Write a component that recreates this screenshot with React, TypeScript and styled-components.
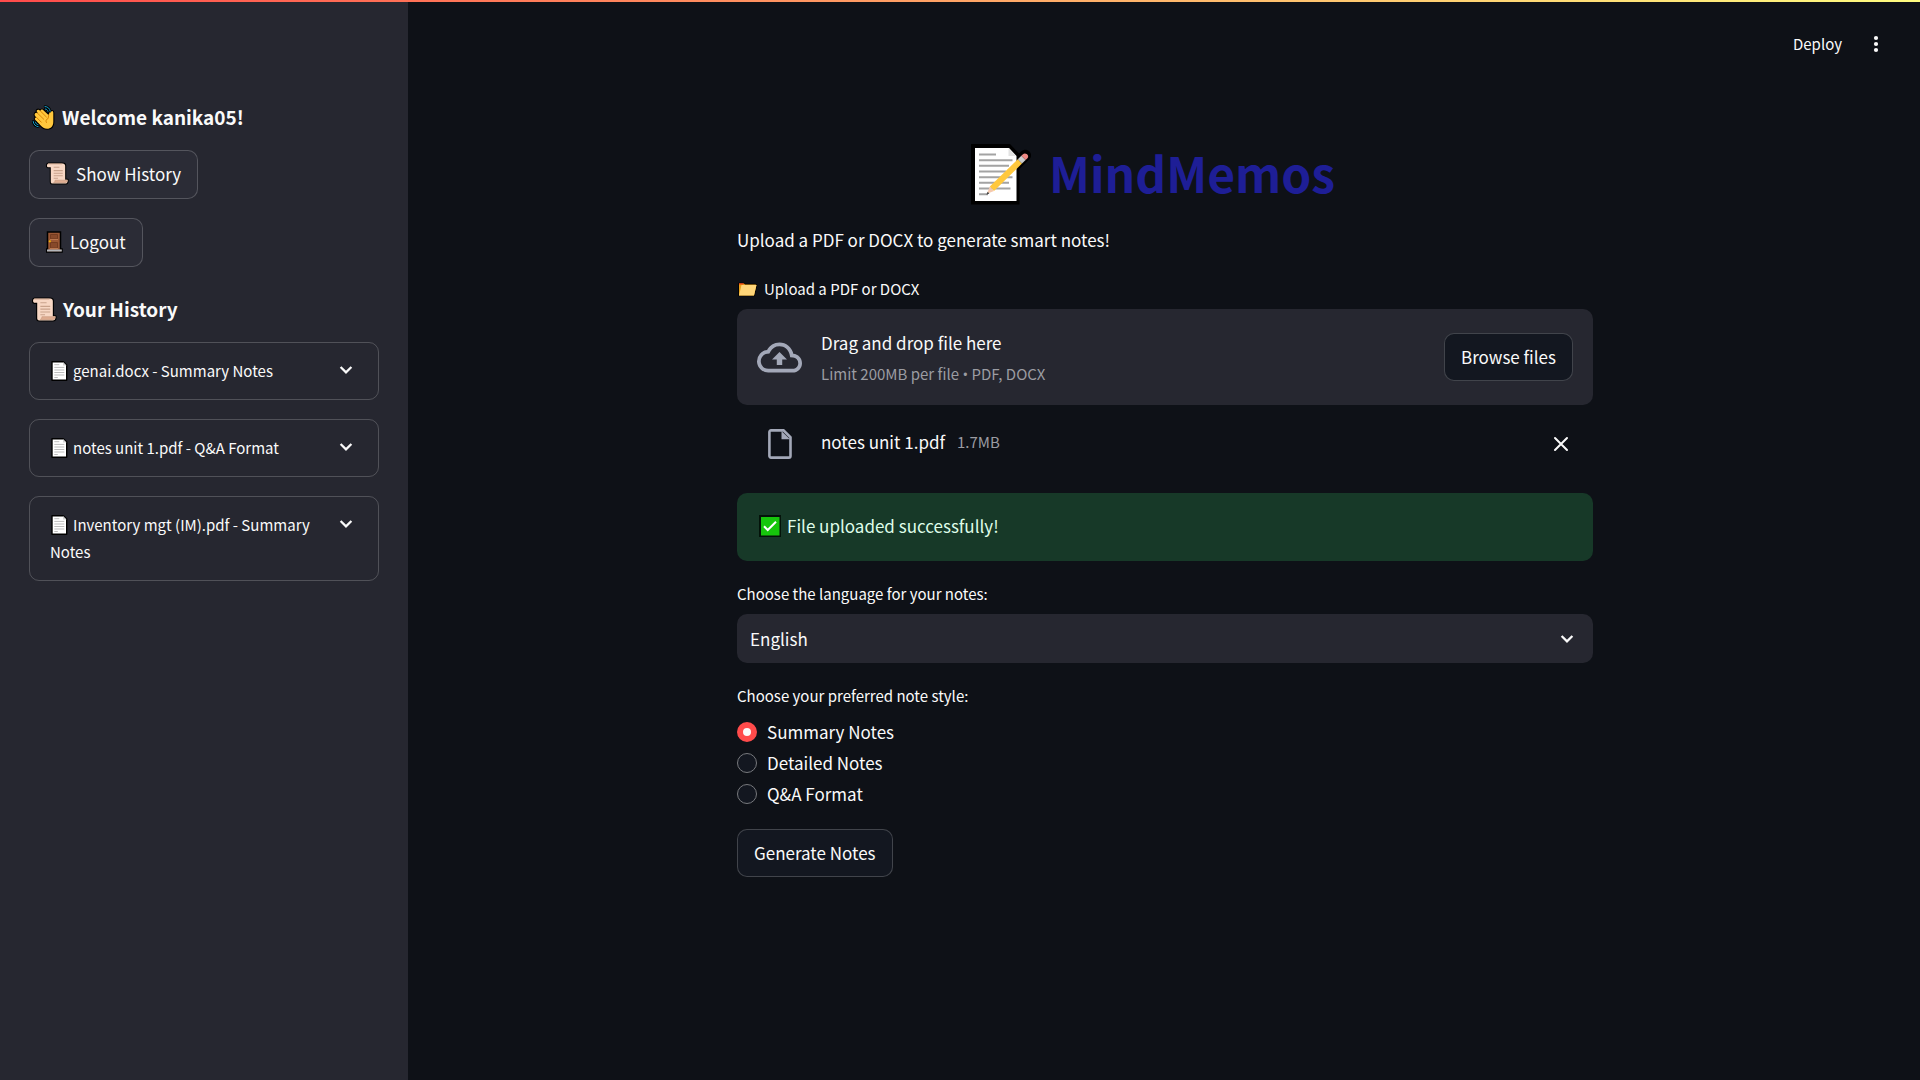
import React, { useState } from "react";
import styled, { createGlobalStyle } from "styled-components";

const fontStack = '"Noto Sans CJK SC", "Noto Sans", sans-serif';

const GlobalStyle = createGlobalStyle`
  *, *::before, *::after { box-sizing: border-box; }
  body {
    margin: 0;
    background: #0e1117;
    color: #fafafa;
    font-family: ${fontStack};
    font-size: 17px;
    line-height: 30px;
  }
  button, select, input { font: inherit; color: inherit; }
  h1, h2, p { margin: 0; }
`;

const Page = styled.div`
  display: flex;
  min-height: 100vh;
`;

const Decoration = styled.div`
  position: fixed;
  inset: 0 0 auto;
  height: 2px;
  background: linear-gradient(90deg, #ff4b4b, #fffd80);
`;

const Sidebar = styled.aside`
  flex: 0 0 408px;
  padding: 105px 29px 40px;
  background: #262730;
`;

const SideHeading = styled.h2`
  display: flex;
  align-items: center;
  gap: 6px;
  height: 24px;
  margin: 0 0 21px;
  padding-left: 3px;
  font-size: 19px;
  line-height: 24px;
  font-weight: 600;
`;

const SideActions = styled.div`
  display: flex;
  flex-direction: column;
  align-items: flex-start;
  gap: 19px;
  margin-bottom: 30px;
`;

const Button = styled.button<{ $onSidebar?: boolean }>`
  display: inline-flex;
  align-items: center;
  gap: 7px;
  height: ${(p) => (p.$onSidebar ? 49 : 48)}px;
  padding: ${(p) => (p.$onSidebar ? "0 16px 2px" : "0 16px")};
  border: 1px solid rgba(250, 250, 250, 0.2);
  border-radius: 10px;
  background: ${(p) => (p.$onSidebar ? "#2b2c36" : "#131720")};
  white-space: nowrap;
  cursor: pointer;
`;

const HistoryList = styled.div`
  display: flex;
  flex-direction: column;
  gap: 19px;
`;

const HistoryItem = styled.details`
  border: 1px solid rgba(250, 250, 250, 0.2);
  border-radius: 10px;
`;

const HistorySummary = styled.summary`
  display: flex;
  justify-content: space-between;
  gap: 10px;
  padding: 14px 25px 15px 20px;
  font-size: 15px;
  line-height: 27px;
  cursor: pointer;
  list-style: none;
`;

const ChevronBox = styled.span`
  display: flex;
  align-items: center;
  flex: none;
  height: 26px;
`;

const PageGlyph = styled.svg`
  width: 18px;
  height: 20px;
  margin-right: 5px;
  vertical-align: -4px;
`;

const Main = styled.main`
  display: flex;
  flex-direction: column;
  flex: 1;
  min-width: 0;
  padding-left: 2px;
`;

const Toolbar = styled.header`
  display: flex;
  justify-content: flex-end;
  align-items: center;
  gap: 22px;
  height: 88px;
  padding: 0 32px;
`;

const ToolButton = styled.button`
  display: flex;
  align-items: center;
  padding: 0;
  border: 0;
  background: none;
  font-size: 15px;
  cursor: pointer;
`;

const Column = styled.div`
  width: 100%;
  max-width: 856px;
  margin: 0 auto;
  padding: 54px 0 60px;
`;

const Title = styled.h1`
  display: flex;
  justify-content: center;
  align-items: center;
  gap: 17px;
  min-height: 64px;
  padding-right: 24px;
  margin-bottom: 19px;
  color: #1e1e96;
  font-size: 48px;
  font-weight: 700;
`;

const TitleText = styled.span`
  padding-bottom: 5px;
  line-height: 56px;
`;

const Intro = styled.p`
  margin-bottom: 22px;
`;

const Label = styled.label`
  display: flex;
  align-items: center;
  gap: 6px;
  margin-bottom: 8px;
  font-size: 15px;
  line-height: 24px;
`;

const Dropzone = styled.div`
  display: flex;
  align-items: center;
  gap: 18px;
  height: 96px;
  padding: 0 20px 0 19px;
  border-radius: 10px;
  background: #262730;
`;

const IconSlot = styled.span`
  display: flex;
  justify-content: center;
  flex: 0 0 47px;
  color: #a3a8b8;
`;

const Grow = styled.div`
  display: grid;
  flex: 1;
  gap: 1px;
  padding-top: 3px;
`;

const Hint = styled.p`
  font-size: 15px;
  color: #9b9ca2;
`;

const Bullet = styled.span`
  font-family: "Open Sans", "Noto Sans", sans-serif;
`;

const HiddenFile = styled.input`
  display: none;
`;

const FileRow = styled.div`
  display: flex;
  align-items: center;
  gap: 18px;
  height: 40px;
  margin: 19px 0 29px;
  padding: 0 22px 0 19px;
`;

const FileName = styled.div`
  display: flex;
  flex: 1;
  gap: 12px;
  padding-bottom: 4px;
`;

const FileSize = styled.small`
  font-size: 15px;
  color: #9b9ca2;
`;

const Alert = styled.div`
  display: flex;
  align-items: center;
  gap: 6px;
  height: 68px;
  margin-bottom: 21px;
  padding: 0 22px 2px;
  border-radius: 10px;
  background: #173928;
  color: #dffde9;
`;

const SelectBox = styled.div`
  display: grid;
  align-items: center;
  margin-bottom: 21px;

  > * { grid-area: 1 / 1; }
  > svg { justify-self: end; margin-right: 19px; pointer-events: none; }
`;

const Select = styled.select`
  width: 100%;
  height: 49px;
  padding: 0 48px 0 13px;
  border: 0;
  border-radius: 10px;
  background: #262730;
  appearance: none;
`;

const RadioGroup = styled.fieldset`
  margin: 0 0 20px;
  padding: 0;
  border: 0;
`;

const Legend = styled.legend`
  padding: 0;
  margin-bottom: 8px;
  font-size: 15px;
  line-height: 24px;
`;

const Option = styled.label`
  display: flex;
  align-items: center;
  gap: 10px;
  line-height: 31px;
`;

const Radio = styled.input`
  width: 20px;
  height: 20px;
  margin: 0;
  border: 1px solid #77797d;
  border-radius: 50%;
  background: #131720;
  appearance: none;

  &:checked {
    border: 6px solid #ff4b4b;
    background: #fafafa;
  }
`;

const Chevron = () => (
  <svg width="14" height="10" viewBox="0 0 14 10" fill="none" stroke="#fafafa" strokeWidth="2.3" aria-hidden>
    <path d="M1.6 2 7 7.4 12.4 2" />
  </svg>
);

const WaveIcon = () => (
  <svg width="24" height="25" viewBox="0 0 24 25" aria-hidden>
    <path
      d="M3.2 8.3c.8-1 2-.7 2.7 0L4.800 6.600c-.5-1.300 1-2.500 2.200-1.700l1.500 1.100c.2-1.400 1.500-1.800 2.600-1l5.400 5.100.9-2.200c.4-1.300 1.200-2.100 2.700-1.800 1 .2 1.200 1 1.200 2v8.600c0 4.700-2.500 7-6.200 7-3 0-4.600-1.200-6.400-3.200L3.400 15c-1.100-1.100-.5-2.600.8-2.600L3 10.800c-.6-.8-.4-1.700.2-2.500z"
      fill="#ffc83d" stroke="#000" strokeWidth="2.200" strokeLinejoin="round" paintOrder="stroke"
    />
    <path d="m5.300 8 6.500 6.300M8.400 6l6 6M4.300 12.200l5 5M16.700 10l-.6 3.500c-2 .7-2.700 2.500-1.700 4" fill="none" stroke="#d67d00" strokeWidth=".9" strokeLinecap="round" />
    <path d="M13 1.500c3 .2 4.800 2 5.200 4.700M13.400 4c1.500.2 2.300 1 2.600 2.400M1.200 16.500c.4 3 2.200 4.800 5 5.200M3.500 17.200c.2 1.300 1.100 2.200 2.500 2.500" fill="none" stroke="#000" strokeWidth="2.600" strokeLinecap="round" />
    <path d="M13 1.500c3 .2 4.800 2 5.200 4.700M13.400 4c1.500.2 2.300 1 2.600 2.400M1.200 16.500c.4 3 2.200 4.800 5 5.200M3.500 17.200c.2 1.300 1.100 2.200 2.500 2.500" fill="none" stroke="#179fc9" strokeWidth="1" strokeLinecap="round" />
  </svg>
);

const ScrollIcon = ({ size }: { size: number }) => (
  <svg width={size} height={size} viewBox="0 0 24 24" aria-hidden>
    <path d="M2.500 1.500h15c1.500 0 2.500 1 2.500 2.500v14.500h2.500v1.500c0 1.500-1 2.500-2.500 2.500H7c-1.500 0-2-1-2-2V5.500H2C.5 5 .8 1.800 2.500 1.500z" fill="#f7d7c4" stroke="#000" strokeWidth="2.200" strokeLinejoin="round" paintOrder="stroke" />
    <path d="M2.200 2h14.500M8 21.500h12c1.300 0 2.200-.9 2.200-2.500H9.500c0 1.300-.5 2.200-1.500 2.500z" fill="#e0ad91" stroke="#c99a80" strokeWidth=".7" />
    <path d="M8 5.500h6M8 9h9.500M8 11.700h9.500M8 14.400h9.500M8 17h4.500" stroke="#c9a38c" strokeWidth="1.100" />
  </svg>
);

const DoorIcon = () => (
  <svg width="17" height="22" viewBox="0 0 17 22" aria-hidden>
    <path d="M1.500 1h13v17H16v3H.7v-3h.8z" fill="#9a5734" stroke="#000" strokeWidth="1.500" />
    <path d="M4.500 3.500h7v4.300h-7zM4.500 11.500h7v5.500h-7z" fill="#87492a" stroke="#743c20" />
    <path d="M4 8.500h8M4 17.500h8" stroke="#b9774f" />
    <circle cx="3.800" cy="10.300" r="1.100" fill="#f0b400" />
    <path d="M1 18.500h14.800v2H1z" fill="#b4b7bb" />
  </svg>
);

const DocIcon = () => (
  <PageGlyph viewBox="0 0 18 20" aria-hidden>
    <path d="M2 .7h11.300L16.700 4v15.300H2z" fill="#fff" stroke="#000" strokeWidth="1.400" strokeLinejoin="round" />
    <path d="M13 1v3.500h3.500z" fill="#d5d5d5" />
    <path d="M4.300 3.700h5M4.300 6.400h10M4.300 9h10M4.300 11.500h10M4.300 14h10M4.300 16.500h3.500" stroke="#bdbdbd" strokeWidth="1" />
  </PageGlyph>
);

const MemoIcon = () => (
  <svg width="61" height="61" viewBox="0 0 61 61" aria-hidden>
    <path d="M0 0h39l9 9.500 2-2c5-5 13 1 9 7L48.500 25v35.500H0z" fill="#000" />
    <path d="M4 4h34l7.500 8v45H4z" fill="#fff" />
    <path d="M37.500 4v8H45z" fill="#e3e3e3" />
    <path d="M8 10.500h17M8 16.200h33.500M8 21.800h30M8 27.500h27M8 33.200h33.500M8 38.800h30M8 44.500h31.500M8 50.200h9" stroke="#a3a3a3" strokeWidth="1.900" />
    <path d="m18.800 42.500 28-27.200 4.200 4.200-28 27.500z" fill="#ffc83d" />
    <path d="m18.800 42.500 4.200 4.500-7 2.800z" fill="#f5c9ae" />
    <path d="m16.600 47.800 1.800 1.800-3 1.200z" fill="#444" />
    <path d="m46.800 15.300 3.500-3.500 4.300 4.300-3.600 3.400z" fill="#cdcdcd" />
    <path d="m50.300 11.800 1.400-1.400c3-3 7.500 1.400 4.500 4.200l-1.600 1.500z" fill="#ee8983" />
  </svg>
);

const FolderIcon = () => (
  <svg width="21" height="15" viewBox="0 0 21 15" aria-hidden>
    <path d="M2 1.500h5l1 1h10.500l1 .500-2.500 10.500H2z" fill="#e9a21b" stroke="#000" strokeWidth="1.600" strokeLinejoin="round" paintOrder="stroke" />
    <path d="M4.500 3h15L17 13.500H2z" fill="#ffd679" />
    <path d="M2 1.300h4.500v1.200H2z" fill="#f03a17" />
  </svg>
);

const CheckIcon = () => (
  <svg width="22" height="22" viewBox="0 0 22 22" aria-hidden>
    <path d="M0 0h22v22H0z" fill="#04130a" />
    <path d="M2 2h18.500v18.500H2z" fill="#16c60c" />
    <path d="m5 11.300 3.700 3.700L17 6.700" fill="none" stroke="#fff" strokeWidth="2" />
  </svg>
);

const CloudIcon = () => (
  <svg width="45" height="45" viewBox="0 0 24 24" fill="currentColor" aria-hidden>
    <path d="M19.350 10.040A7.490 7.490 0 0 0 12 4C9.110 4 6.600 5.640 5.350 8.040A5.994 5.994 0 0 0 0 14c0 3.310 2.690 6 6 6h13c2.760 0 5-2.240 5-5 0-2.640-2.050-4.780-4.650-4.960zM19 18H6c-2.210 0-4-1.790-4-4 0-2.050 1.530-3.760 3.560-3.970l1.070-.11.500-.95A5.469 5.469 0 0 1 12 6c2.620 0 4.880 1.860 5.390 4.430l.3 1.500 1.530.11A2.980 2.980 0 0 1 22 15c0 1.650-1.350 3-3 3zM8 13h2.550v3h2.900v-3H16l-4-4z" />
  </svg>
);

const FileIcon = () => (
  <svg width="24" height="30" viewBox="0 0 24 30" aria-hidden>
    <path d="M3 1.400h12.500l7 7V27c0 .9-.7 1.600-1.600 1.600H3c-.9 0-1.600-.7-1.600-1.600V3c0-.9.700-1.600 1.600-1.600z" fill="none" stroke="currentColor" strokeWidth="2.600" />
    <path d="M13.500 2v8.200H22z" fill="currentColor" />
  </svg>
);

const historyEntries = [
  "genai.docx - Summary Notes",
  "notes unit 1.pdf - Q&A Format",
  "Inventory mgt (IM).pdf - Summary Notes",
];

const noteStyles = ["Summary Notes", "Detailed Notes", "Q&A Format"];

export default function App() {
  const [noteStyle, setNoteStyle] = useState(noteStyles[0]);

  return (
    <>
      <GlobalStyle />
      <Page>
        <Sidebar>
          <SideHeading><WaveIcon />Welcome kanika05!</SideHeading>
          <SideActions>
            <Button $onSidebar><ScrollIcon size={23} />Show History</Button>
            <Button $onSidebar><DoorIcon />Logout</Button>
          </SideActions>
          <SideHeading><ScrollIcon size={25} />Your History</SideHeading>
          <HistoryList>
            {historyEntries.map((entry) => (
              <HistoryItem key={entry}>
                <HistorySummary>
                  <span><DocIcon />{entry}</span>
                  <ChevronBox><Chevron /></ChevronBox>
                </HistorySummary>
              </HistoryItem>
            ))}
          </HistoryList>
        </Sidebar>

        <Main>
          <Toolbar>
            <ToolButton>Deploy</ToolButton>
            <ToolButton aria-label="Main menu">
              <svg width="24" height="24" viewBox="0 0 24 24" fill="#fafafa" aria-hidden>
                <circle cx="12" cy="6" r="2.100" />
                <circle cx="12" cy="12" r="2.100" />
                <circle cx="12" cy="18" r="2.100" />
              </svg>
            </ToolButton>
          </Toolbar>

          <Column>
            <Title><MemoIcon /><TitleText>MindMemos</TitleText></Title>
            <Intro>Upload a PDF or DOCX to generate smart notes!</Intro>

            <Label htmlFor="upload"><FolderIcon />Upload a PDF or DOCX</Label>
            <Dropzone>
              <IconSlot><CloudIcon /></IconSlot>
              <Grow>
                <p>Drag and drop file here</p>
                <Hint>Limit 200MB per file <Bullet>•</Bullet> PDF, DOCX</Hint>
              </Grow>
              <HiddenFile id="upload" type="file" accept=".pdf,.docx" />
              <Button>Browse files</Button>
            </Dropzone>

            <FileRow>
              <IconSlot><FileIcon /></IconSlot>
              <FileName>
                notes unit 1.pdf
                <FileSize>1.7MB</FileSize>
              </FileName>
              <ToolButton aria-label="Remove file">
                <svg width="20" height="20" viewBox="0 0 20 20" stroke="#fafafa" strokeWidth="2" strokeLinecap="round" aria-hidden>
                  <path d="m4 4 12 12M16 4 4 16" />
                </svg>
              </ToolButton>
            </FileRow>

            <Alert role="status"><CheckIcon />File uploaded successfully!</Alert>

            <Label htmlFor="language">Choose the language for your notes:</Label>
            <SelectBox>
              <Select id="language" defaultValue="English">
                <option>English</option>
              </Select>
              <Chevron />
            </SelectBox>

            <RadioGroup>
              <Legend>Choose your preferred note style:</Legend>
              {noteStyles.map((style) => (
                <Option key={style}>
                  <Radio
                    type="radio"
                    name="note-style"
                    checked={noteStyle === style}
                    onChange={() => setNoteStyle(style)}
                  />
                  {style}
                </Option>
              ))}
            </RadioGroup>

            <Button>Generate Notes</Button>
          </Column>
        </Main>
      </Page>
      <Decoration />
    </>
  );
}
